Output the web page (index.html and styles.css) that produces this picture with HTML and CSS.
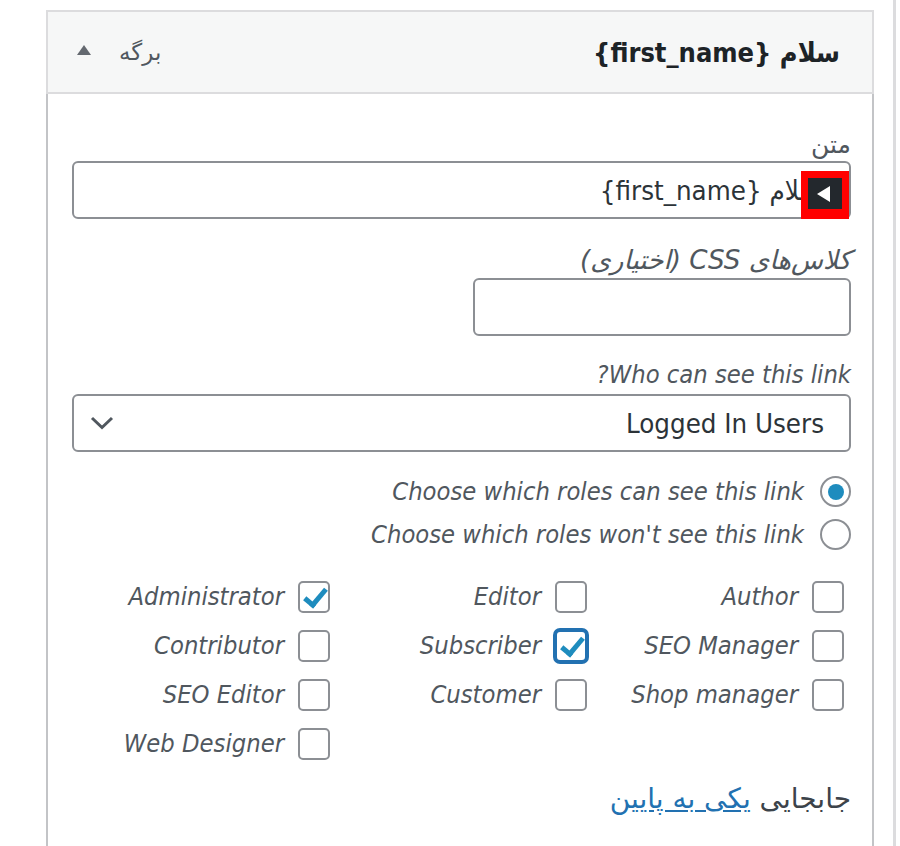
FILE: index.html
```html
<!DOCTYPE html>
<html lang="fa">
<head>
    <meta charset="UTF-8">
    <meta name="viewport" content="width=device-width, initial-scale=1.0">
    <title>ویرایش آیتم فهرست</title>
    <link rel="stylesheet" href="styles.css">
</head>
<body>

    <div class="screen">
        <div class="menu-item">
            <div class="item-bar">
                <span class="item-title">سلام {first_name}</span>
                <span class="item-controls">
                    <span class="item-type">برگه</span>
                    <span class="item-toggle"></span>
                </span>
            </div>

            <div class="item-settings">
                <p class="field">
                    <label class="field-label plain" for="title">متن</label>
                    <span class="input-wrap">
                        <input id="title" class="text-input" type="text" value="سلام {first_name}">
                        <span class="marker"><span class="marker-arrow"></span></span>
                    </span>
                </p>

                <p class="field">
                    <label class="field-label wide" for="classes">کلاس‌های CSS (اختیاری)</label>
                    <input id="classes" class="text-input short" type="text">
                </p>

                <div class="field">
                    <span class="field-label">Who can see this link?</span>
                    <div class="select-box">
                        <span>Logged In Users</span>
                        <svg width="24" height="14" viewBox="0 0 24 14">
                            <polyline points="2,2 12,11.5 22,2" fill="none" stroke="#50575e" stroke-width="3"/>
                        </svg>
                    </div>
                </div>

                <div class="radio-list">
                    <label class="radio-row"><span class="radio checked"></span>Choose which roles can see this link</label>
                    <label class="radio-row"><span class="radio"></span>Choose which roles won't see this link</label>
                </div>

                <div class="roles">
                    <label class="role">Administrator<span class="check checked"></span></label>
                    <label class="role">Editor<span class="check"></span></label>
                    <label class="role">Author<span class="check"></span></label>

                    <label class="role">Contributor<span class="check"></span></label>
                    <label class="role">Subscriber<span class="check checked focused"></span></label>
                    <label class="role">SEO Manager<span class="check"></span></label>

                    <label class="role">SEO Editor<span class="check"></span></label>
                    <label class="role">Customer<span class="check"></span></label>
                    <label class="role">Shop manager<span class="check"></span></label>

                    <label class="role">Web Designer<span class="check"></span></label>
                </div>

                <p class="move">جابجایی <a href="#">یکی به پایین</a></p>
            </div>
        </div>
    </div>

</body>
</html>
```

FILE: styles.css
```css
body {
    margin: 0;
    background-color: #fff;
    font-family: "DejaVu Sans Condensed", "DejaVu Sans", sans-serif;
    color: #2c3338;
}

.screen {
    width: 893px;
    min-height: 846px;
    border-right: 3px solid #dcdcde;
}

.menu-item {
    direction: rtl;
    width: 828px;
    margin-left: 46px;
    padding-top: 10px;
}

.item-bar {
    display: flex;
    justify-content: space-between;
    align-items: center;
    height: 80px;
    padding: 0 32px 0 29px;
    background-color: #f6f7f7;
    border: 2px solid #dcdcde;
}

.item-title {
    font-weight: bold;
    font-size: 27px;
    color: #1d2327;
}

.item-controls {
    display: flex;
    align-items: center;
    gap: 28px;
}

.item-type {
    font-family: "DejaVu Sans", sans-serif;
    font-size: 23px;
    color: #50575e;
}

.item-toggle {
    width: 0;
    height: 0;
    border-left: 7.5px solid transparent;
    border-right: 7.5px solid transparent;
    border-bottom: 10px solid #646970;
    margin-top: -4px;
}

.item-settings {
    padding: 36px 21px 30px 24px;
    border: 2px solid #c3c4c7;
    border-top: none;
    border-bottom: none;
    min-height: 720px;
}

.field {
    margin: 0;
}

.field-label {
    display: block;
    font-style: italic;
    font-size: 25.3px;
    line-height: 30px;
    color: #50575e;
}

.field-label.plain {
    font-style: normal;
    font-family: "DejaVu Sans", sans-serif;
    font-size: 25px;
}

.field-label.wide {
    font-family: "DejaVu Sans", sans-serif;
    font-size: 26.2px;
}

.field + .field {
    margin-top: 26px;
}

.field + .field + .field {
    margin-top: 24px;
}

.input-wrap {
    position: relative;
    display: block;
    margin-top: 1px;
}

.text-input {
    box-sizing: border-box;
    display: block;
    width: 100%;
    height: 58px;
    margin: 0;
    padding: 0 29px 0 14px;
    border: 2px solid #8c8f94;
    border-radius: 6px;
    background-color: #fff;
    font-family: inherit;
    font-size: 27.4px;
    color: #2c3338;
    direction: rtl;
}

.text-input.short {
    width: 378px;
    margin-top: 3px;
}

.marker {
    position: absolute;
    top: 10px;
    right: 2px;
    display: flex;
    align-items: center;
    width: 34px;
    height: 31px;
    border: 7px solid #f00;
    border-bottom-width: 10px;
    background-color: #23282d;
}

.marker-arrow {
    width: 0;
    height: 0;
    margin-right: 12px;
    border-top: 8.5px solid transparent;
    border-bottom: 8.5px solid transparent;
    border-right: 13px solid #fff;
}

.select-box {
    box-sizing: border-box;
    display: flex;
    justify-content: space-between;
    align-items: center;
    height: 58px;
    margin-top: 4px;
    padding: 0 25px 0 16px;
    border: 2px solid #8c8f94;
    border-radius: 6px;
    font-size: 27.4px;
    color: #2c3338;
}

.radio-list {
    margin-top: 18px;
}

.radio-row {
    display: flex;
    align-items: center;
    gap: 16px;
    height: 43px;
    font-style: italic;
    font-size: 25.3px;
    color: #50575e;
}

.radio {
    box-sizing: border-box;
    display: flex;
    justify-content: center;
    align-items: center;
    width: 31px;
    height: 31px;
    border: 2px solid #8c8f94;
    border-radius: 50%;
}

.radio.checked::after {
    content: "";
    width: 16px;
    height: 16px;
    border-radius: 50%;
    background-color: #1e8cbe;
}

.roles {
    direction: ltr;
    display: grid;
    grid-template-columns: repeat(3, 1fr);
    grid-auto-rows: 49px;
    margin-top: 16px;
    padding: 0 7px 0 1px;
}

.role {
    display: flex;
    justify-content: flex-end;
    align-items: center;
    gap: 14px;
    font-style: italic;
    font-size: 25.3px;
    color: #50575e;
}

.check {
    box-sizing: border-box;
    position: relative;
    flex: none;
    width: 32px;
    height: 32px;
    border: 2px solid #8c8f94;
    border-radius: 5px;
    background-color: #fff;
}

.check.checked::after {
    content: "";
    position: absolute;
    left: 9px;
    top: 1px;
    width: 8px;
    height: 18px;
    border-right: 5px solid #1e8cbe;
    border-bottom: 5px solid #1e8cbe;
    transform: rotate(40deg);
}

.check.focused {
    border-color: #2271b1;
    box-shadow: 0 0 0 2px #2271b1;
}

.move {
    margin: 16px 0 0;
    font-family: "DejaVu Sans", sans-serif;
    font-size: 28px;
    line-height: 30px;
    color: #3c434a;
}

.move a {
    color: #2271b1;
}
```
